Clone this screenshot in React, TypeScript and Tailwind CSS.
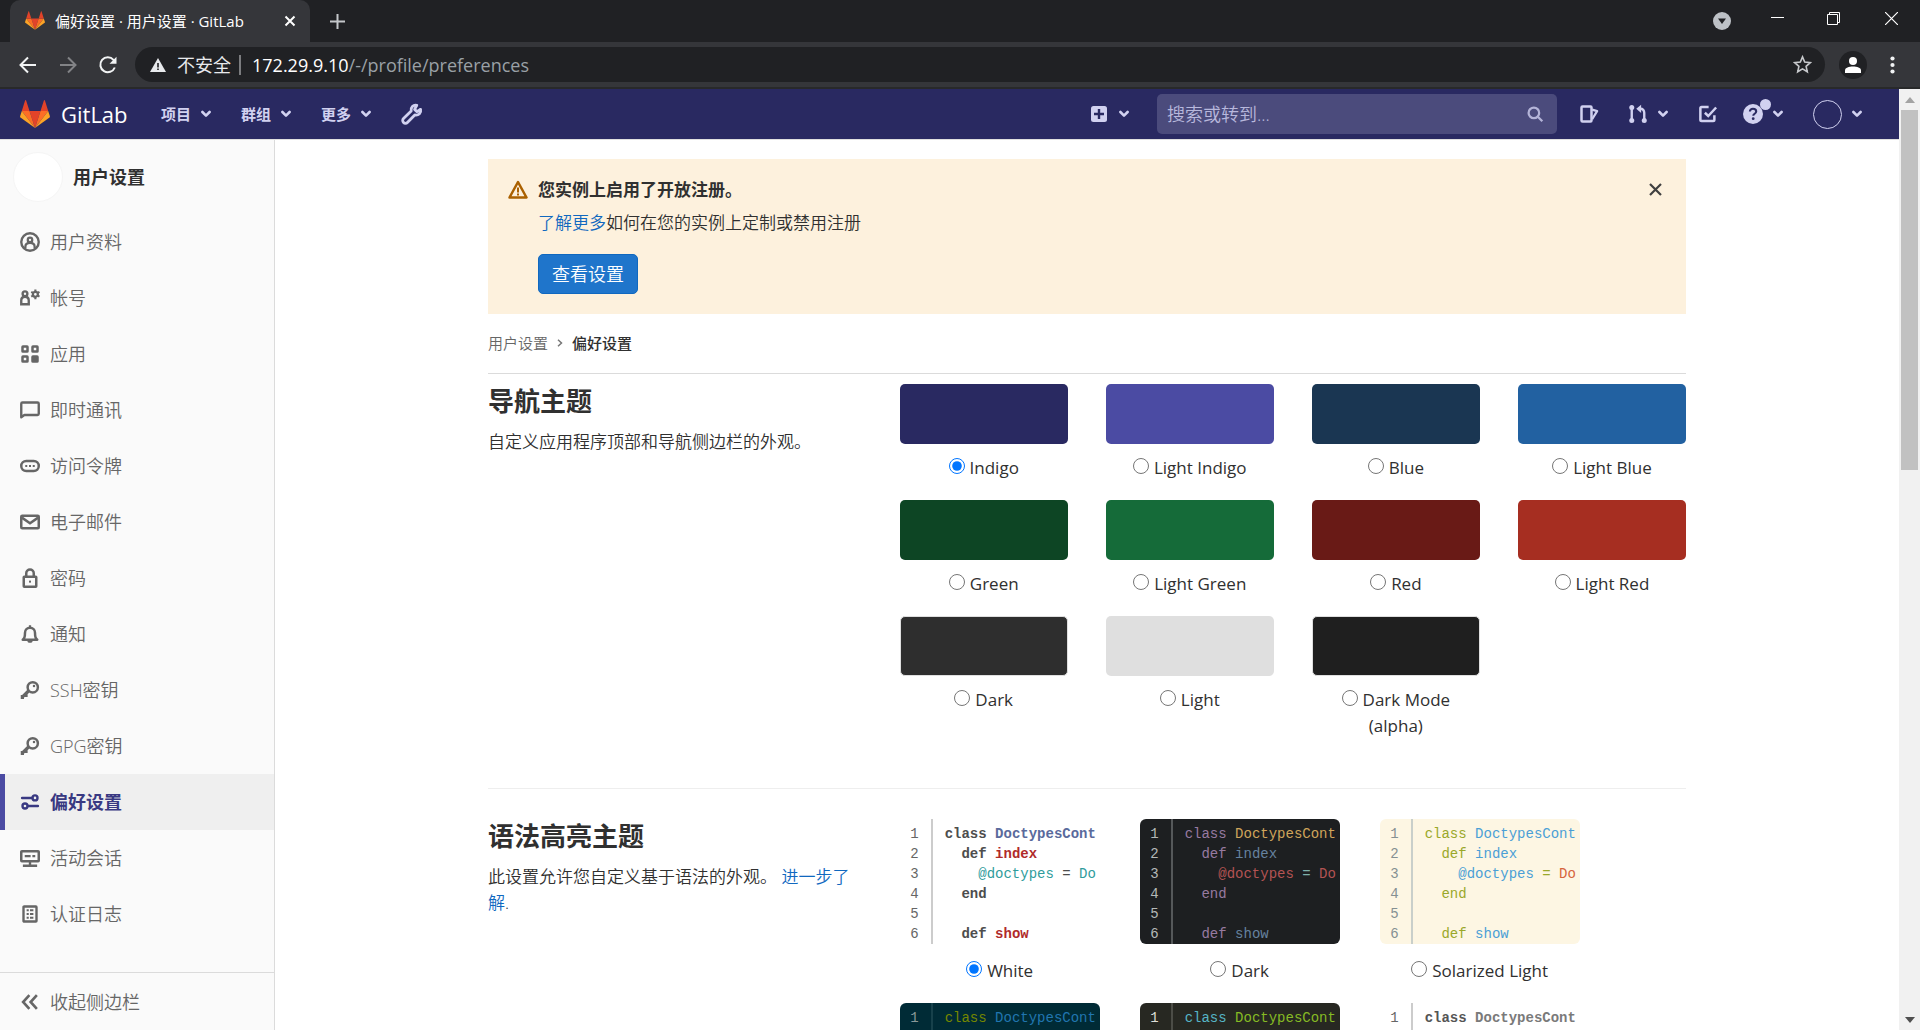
import React from 'react';

type IconProps = { className?: string };

const Svg = ({ className = 'size-5', children }: { className?: string; children: React.ReactNode }) => (
  <svg className={`${className} shrink-0`} viewBox="0 0 16 16" fill="none" stroke="currentColor" strokeWidth="2" aria-hidden="true">
    {children}
  </svg>
);

const Tanuki = ({ className }: IconProps) => (
  <svg className={`${className} shrink-0`} viewBox="0 0 30 28" aria-hidden="true">
    <path fill="#e24329" d="M15 28 20.5 11h-11z" />
    <path fill="#fc6d26" d="M15 28 9.5 11H1.8z" />
    <path fill="#fca326" d="M1.8 11 .1 16.200c-.15.5 0 1 .4 1.300L15 28z" />
    <path fill="#e24329" d="M1.800 11h7.700L6.200.700C6-.1 5.200-.1 5 .700z" />
    <path fill="#fc6d26" d="M15 28 20.500 11h7.700z" />
    <path fill="#fca326" d="m28.200 11 1.700 5.200c.15.5 0 1-.4 1.300L15 28z" />
    <path fill="#e24329" d="M28.200 11h-7.700L23.800.700c.2-.8 1-.8 1.200 0z" />
  </svg>
);

const Chevron = () => (
  <svg className="w-[10px] h-[8px] shrink-0" viewBox="0 0 10 8" fill="none" stroke="currentColor" strokeWidth="2.600" strokeLinecap="round" strokeLinejoin="round" aria-hidden="true">
    <path d="M1.400 2 5 5.600 8.600 2" />
  </svg>
);

const ProfileIcon = () => (
  <Svg>
    <circle cx="8" cy="8" r="7" strokeWidth="1.900" />
    <circle cx="8" cy="6.300" r="1.800" strokeWidth="1.800" />
    <path d="M4.300 13v-1.300c0-2 1.500-3 3.700-3s3.700 1 3.700 3V13" strokeWidth="1.800" />
  </Svg>
);
const AccountIcon = () => (
  <Svg>
    <circle cx="4" cy="4.600" r="1.900" strokeWidth="1.900" />
    <path d="M1 13V10c0-1.800 1.200-3 3-3s3 1.200 3 3v3z" strokeWidth="1.900" />
    <circle cx="12.300" cy="5" r="2" strokeWidth="1.800" />
    <path d="M12.300 1.100v1.600M12.300 7.300v1.600M9 3.100l1.400.8M14.200 6.100l1.400.8M9 6.900l1.400-.8M14.200 3.900l1.400-.8" strokeWidth="1.700" />
  </Svg>
);
const AppsIcon = () => (
  <Svg>
    <rect x="2" y="2" width="4" height="4" rx=".3" />
    <rect x="10" y="2" width="4" height="4" rx=".3" />
    <rect x="2" y="10" width="4" height="4" rx=".3" />
    <rect x="10" y="10" width="4" height="4" rx=".3" fill="currentColor" />
  </Svg>
);
const ChatIcon = () => (
  <Svg><path d="M1 13.800V3c0-.6.4-1 1-1h12c.6 0 1 .4 1 1v8c0 .6-.4 1-1 1H3.500z" strokeWidth="1.900" strokeLinejoin="round" /></Svg>
);
const TokenIcon = () => (
  <Svg>
    <rect x="1" y="4" width="14" height="8" rx="4" />
    <path d="M4.200 8h1.600M7.200 8h1.600M10.200 8h1.600" strokeWidth="1.600" />
  </Svg>
);
const MailIcon = () => (
  <Svg>
    <rect x="1" y="3" width="14" height="10" rx=".8" />
    <path d="M1.500 4.500 8 9l6.500-4.500" />
  </Svg>
);
const LockIcon = () => (
  <Svg>
    <rect x="3" y="7" width="10" height="8" rx=".4" />
    <path d="M5 7V4.200a3 3 0 0 1 6 0V7" />
    <rect x="7.200" y="10.100" width="1.600" height="1.600" fill="currentColor" stroke="none" />
  </Svg>
);
const BellIcon = () => (
  <Svg>
    <path d="M2.200 12.500c1.600-.8 1.800-2 1.800-5.500a4 4 0 0 1 8 0c0 3.500.2 4.700 1.800 5.500z" strokeLinejoin="round" />
    <path d="M6 13.500h4v.5c0 .6-.9 1-2 1s-2-.4-2-1zM7.100 1h1.800v2H7.100z" fill="currentColor" stroke="none" />
  </Svg>
);
const KeyIcon = () => (
  <Svg>
    <circle cx="10.200" cy="5.800" r="4.100" />
    <path d="M7.200 8.400 2 13.500M1.900 12v3.200M4.800 11v2.500" strokeWidth="2.600" />
    <circle cx="11.200" cy="4.800" r="1" fill="currentColor" stroke="none" />
  </Svg>
);
const PreferencesIcon = () => (
  <Svg>
    <path d="M1.700 4.700h8M6.500 11.200h7.800" strokeLinecap="round" />
    <circle cx="12" cy="4.700" r="2" strokeWidth="1.900" />
    <circle cx="4" cy="11.200" r="2" strokeWidth="1.900" />
  </Svg>
);
const SessionIcon = () => (
  <Svg>
    <rect x="1" y="2.500" width="14" height="8" rx=".5" />
    <path d="M3.800 6.500h4.700M9.900 6.500h2.300M8 11v3M2.300 14.200h11.400" strokeWidth="1.900" />
  </Svg>
);
const LogIcon = () => (
  <Svg>
    <rect x="2.800" y="2" width="10.400" height="12" rx=".5" strokeWidth="1.900" />
    <path d="M5.300 5h1.700M8 5h2.700M5.300 8h1.700M8 8h2.700M5.300 11h1.700M8 11h2.700" strokeWidth="1.600" />
  </Svg>
);

const NAV: { label: string; icon: () => React.JSX.Element; active?: boolean }[] = [
  { label: '用户资料', icon: ProfileIcon },
  { label: '帐号', icon: AccountIcon },
  { label: '应用', icon: AppsIcon },
  { label: '即时通讯', icon: ChatIcon },
  { label: '访问令牌', icon: TokenIcon },
  { label: '电子邮件', icon: MailIcon },
  { label: '密码', icon: LockIcon },
  { label: '通知', icon: BellIcon },
  { label: 'SSH密钥', icon: KeyIcon },
  { label: 'GPG密钥', icon: KeyIcon },
  { label: '偏好设置', icon: PreferencesIcon, active: true },
  { label: '活动会话', icon: SessionIcon },
  { label: '认证日志', icon: LogIcon },
];

const THEMES = [
  { name: 'Indigo', swatch: 'bg-[#292961]' },
  { name: 'Light Indigo', swatch: 'bg-[#4b4ba3]' },
  { name: 'Blue', swatch: 'bg-[#1a3652]' },
  { name: 'Light Blue', swatch: 'bg-[#2261a1]' },
  { name: 'Green', swatch: 'bg-[#0d4524]' },
  { name: 'Light Green', swatch: 'bg-[#156b39]' },
  { name: 'Red', swatch: 'bg-[#691a16]' },
  { name: 'Light Red', swatch: 'bg-[#a62e21]' },
  { name: 'Dark', swatch: 'bg-[#2e2e2e] border border-[#dfdfdf]' },
  { name: 'Light', swatch: 'bg-[#dfdfdf]' },
  { name: 'Dark Mode (alpha)', swatch: 'bg-[#1f1f1f] border border-[#dfdfdf]' },
];

type Syntax = {
  name: string; box: string; num: string; rule: string; kw: string; cls: string; fn: string; ivar: string; op: string; cons: string;
};

const SYNTAX: Syntax[] = [
  { name: 'White', box: 'bg-white', num: 'text-[#666]', rule: 'border-[#ccc]', kw: 'text-[#4d4d4d] font-bold', cls: 'text-[#5a6a9c] font-bold', fn: 'text-[#b02a2a] font-bold', ivar: 'text-[#2f9c9c]', op: 'text-[#4d4d4d]', cons: 'text-[#2f9c9c]' },
  { name: 'Dark', box: 'bg-[#1d1f21]', num: 'text-[#b5b9b8]', rule: 'border-[#55585a]', kw: 'text-[#977aa0]', cls: 'text-[#d0a55b]', fn: 'text-[#66829f]', ivar: 'text-[#b35353]', op: 'text-[#7fb0aa]', cons: 'text-[#b35353]' },
  { name: 'Solarized Light', box: 'bg-[#fdf6e3]', num: 'text-[#859092]', rule: 'border-[#c9cfca]', kw: 'text-[#9aa82a]', cls: 'text-[#4b9fd6]', fn: 'text-[#4b9fd6]', ivar: 'text-[#4b9fd6]', op: 'text-[#9aa82a]', cons: 'text-[#d6643c]' },
  { name: 'Solarized Dark', box: 'bg-[#002b36]', num: 'text-[#8a9899]', rule: 'border-[#17414b]', kw: 'text-[#758700]', cls: 'text-[#2076b0]', fn: 'text-[#2076b0]', ivar: 'text-[#2076b0]', op: 'text-[#758700]', cons: 'text-[#cb4b16]' },
  { name: 'Monokai', box: 'bg-[#272822]', num: 'text-[#deded8]', rule: 'border-[#4c4d47]', kw: 'text-[#56b5c6]', cls: 'text-[#86bb24]', fn: 'text-[#86bb24]', ivar: 'text-[#deded8]', op: 'text-[#f92672]', cons: 'text-[#56b5c6]' },
  { name: 'None', box: 'bg-white', num: 'text-[#666]', rule: 'border-[#ccc]', kw: 'text-[#555] font-bold', cls: 'text-[#7a7a7a] font-bold', fn: 'text-[#555]', ivar: 'text-[#555]', op: 'text-[#555]', cons: 'text-[#555]' },
];

const Preview = ({ s }: { s: Syntax }) => (
  <div className={`${s.box} flex h-[125px] overflow-hidden rounded-md font-['Liberation_Mono','Noto_Sans_CJK_SC',monospace] text-sm/5`}>
    <pre className={`${s.num} ${s.rule} w-[33px] shrink-0 border-r-2 pt-[5px] pr-3 text-right font-[inherit]`}>{'1\n2\n3\n4\n5\n6'}</pre>
    <pre className="pt-[5px] pl-3 font-[inherit]">
      <span className={s.kw}>class</span> <span className={s.cls}>DoctypesCont</span>{'\n  '}
      <span className={s.kw}>def</span> <span className={s.fn}>index</span>{'\n    '}
      <span className={s.ivar}>@doctypes</span> <span className={s.op}>=</span> <span className={s.cons}>Do</span>{'\n  '}
      <span className={s.kw}>end</span>{'\n\n  '}
      <span className={s.kw}>def</span> <span className={s.fn}>show</span>
    </pre>
  </div>
);

const BrowserChrome = () => (
  <div className="shrink-0 border-b-2 border-[#28292a] bg-[#35363a] text-white">
    <div className="flex h-[42px] items-stretch bg-[#202124] pl-[10px]">
      <div className="flex w-[300px] items-center rounded-t-[10px] bg-[#35363a] pr-[13px] pl-[15px] pb-2 pt-[7px]">
        <Tanuki className="h-[19px] w-5" />
        <span className="ml-[10px] flex-1 whitespace-nowrap text-[15px]/5">偏好设置 · 用户设置 · GitLab</span>
        <button aria-label="关闭标签页" className="p-px">
          <svg className="size-3" viewBox="0 0 12 12" stroke="currentColor" strokeWidth="2"><path d="m1.500 1.500 9 9m0-9-9 9" /></svg>
        </button>
      </div>
      <button aria-label="新标签页" className="ml-5 text-[#c4c7ca]">
        <svg className="size-[15px]" viewBox="0 0 15 15" stroke="currentColor" strokeWidth="2"><path d="M0 7.500h15M7.500 0v15" /></svg>
      </button>
      <div className="ml-auto flex items-center pr-[22px]">
        <button aria-label="搜索标签页">
          <svg className="size-[18px]" viewBox="0 0 18 18"><circle cx="9" cy="9" r="9" fill="#bdc1c6" /><path d="M5 6.500h8L9 12z" fill="#202124" /></svg>
        </button>
        <button aria-label="最小化" className="ml-10 pb-[7px]">
          <svg className="h-px w-[13px]" viewBox="0 0 13 1"><path d="M0 0h13v1H0z" fill="#fff" /></svg>
        </button>
        <button aria-label="还原" className="ml-[43px] pb-[5px]">
          <svg className="size-[13px]" viewBox="0 0 13 13" fill="none" stroke="#fff"><path d="M.5 2.500h10v10H.5zM2.500 2.500v-2h10v10h-2" /></svg>
        </button>
        <button aria-label="关闭" className="ml-[45px] pb-[5px]">
          <svg className="size-[13px]" viewBox="0 0 13 13" stroke="#fff" strokeWidth="1.200"><path d="m0 0 13 13M13 0 0 13" /></svg>
        </button>
      </div>
    </div>
    <div className="flex h-[45px] items-center pr-[25px] pl-[18px]">
      <button aria-label="后退">
        <svg className="size-5" viewBox="0 0 20 20" fill="none" stroke="#f1f3f4" strokeWidth="2"><path d="M18 10H3M10 2.500 2.500 10l7.500 7.500" /></svg>
      </button>
      <button aria-label="前进" className="ml-5">
        <svg className="size-5" viewBox="0 0 20 20" fill="none" stroke="#828386" strokeWidth="2"><path d="M2 10h15M10 2.500l7.500 7.500-7.500 7.500" /></svg>
      </button>
      <button aria-label="重新加载" className="ml-5">
        <svg className="size-5" viewBox="0 0 20 20" fill="none" stroke="#f1f3f4" strokeWidth="2"><path d="M16.800 12.500A7.500 7.500 0 1 1 15.500 4.800L17 6.500" /><path d="M18.500 1.800v7h-7z" fill="#f1f3f4" stroke="none" /></svg>
      </button>
      <div className="ml-[17px] flex h-[35px] flex-1 items-center rounded-full bg-[#202124] pr-[13px] pl-[15px] text-[18px]/6">
        <svg className="h-[14px] w-4" viewBox="0 0 16 14"><path d="M8 0 16 14H0z" fill="#e8eaed" /><path d="M7.200 5h1.600v4.500H7.200zM7.200 10.500h1.600v1.600H7.200z" fill="#202124" /></svg>
        <span className="ml-[11px] text-[#e8eaed]">不安全</span>
        <span className="mr-[11px] ml-2 h-5 w-[2px] bg-[#7b7c7f]" />
        <span role="textbox" aria-label="地址" tabIndex={0} className="flex-1 whitespace-nowrap outline-none">172.29.9.10<span className="text-[#9aa0a6]">/-/profile/preferences</span></span>
        <button aria-label="收藏">
          <svg className="size-[19px]" viewBox="0 0 19 19" fill="none" stroke="#c7c9cc" strokeWidth="1.600"><path d="m9.500 1.900 2.200 5.200 5.600.5-4.200 3.700 1.200 5.500-4.800-2.900-4.800 2.900 1.200-5.500-4.200-3.700 5.600-.5z" /></svg>
        </button>
      </div>
      <button aria-label="个人资料" className="ml-[14px] flex size-7 items-center justify-center rounded-full bg-[#202124]">
        <svg className="size-4" viewBox="0 0 16 16" fill="#fff"><circle cx="8" cy="4" r="4" /><path d="M0 16v-2.500c0-3 4-4 8-4s8 1 8 4V16z" /></svg>
      </button>
      <button aria-label="菜单" className="ml-[23px]">
        <svg className="h-[18px] w-[5px]" viewBox="0 0 5 18" fill="#f1f3f4"><circle cx="2.500" cy="2.500" r="2.100" /><circle cx="2.500" cy="9" r="2.100" /><circle cx="2.500" cy="15.500" r="2.100" /></svg>
      </button>
    </div>
  </div>
);

const Navbar = () => (
  <header className="flex h-[51px] shrink-0 items-center border-b border-[#dfdfdf] bg-[#292961] pr-[37px] pl-5 text-[#d1d1f0]">
    <a href="#home" className="flex items-center gap-[11px] text-white">
      <Tanuki className="h-7 w-[30px]" />
      <span className="w-[70px] text-[22px]/7">GitLab</span>
    </a>
    <nav className="ml-[30px] flex items-center gap-[30px] text-[15px]/5 font-bold">
      {['项目', '群组', '更多'].map((t) => (
        <button key={t} className="flex items-center gap-[10px]">{t}<Chevron /></button>
      ))}
      <a href="#admin" aria-label="管理中心">
        <svg className="size-[22px]" viewBox="0 0 22 22" fill="none" stroke="currentColor" strokeWidth="2.800" strokeLinejoin="round">
          <path d="M19.600 6.300 16 8.600 13.600 6.400 15.800 2.300C12.300 1.500 9.400 4.300 10.200 8L2.500 15.600a2.700 2.700 0 0 0 3.900 3.900L13.800 12c3.900.7 6.600-2.200 5.800-5.700z" />
        </svg>
      </a>
    </nav>
    <div className="ml-auto flex items-center">
      <button aria-label="新建" className="flex items-center gap-3">
        <svg className="size-4" viewBox="0 0 16 16"><rect width="16" height="16" rx="2.500" fill="currentColor" /><path d="M8 3v10M3 8h10" stroke="#292961" strokeWidth="2.400" /></svg>
        <Chevron />
      </button>
      <div className="ml-7 flex h-10 w-[400px] items-center rounded-[5px] bg-[#4b4b7c] pr-[13px] pl-[10px]">
        <input aria-label="搜索" className="h-8 min-w-0 flex-1 bg-transparent text-[18px]/6 font-[350] outline-none placeholder:text-[#b8b8dc]" placeholder="搜索或转到..." />
        <svg className="size-[18px]" viewBox="0 0 16 16" fill="none" stroke="#b4b4d8" strokeWidth="2"><circle cx="7" cy="7" r="4.700" /><path d="m10.500 10.500 4 4" /></svg>
      </div>
      <a href="#issues" aria-label="议题" className="ml-[22px]">
        <svg className="size-5" viewBox="0 0 16 16" fill="none" stroke="currentColor" strokeWidth="2"><rect x="2" y="2" width="8" height="12" rx=".8" /><path d="M10.500 4.500l4 1.200-4 6.500" strokeWidth="1.800" strokeLinejoin="round" /></svg>
      </a>
      <button aria-label="合并请求" className="ml-[29px] flex items-center gap-[10px]">
        <svg className="size-5" viewBox="0 0 16 16" fill="none" stroke="currentColor" strokeWidth="1.900"><path d="M3 3v10M13 13V7c0-2-1.200-3.200-3-3.200H9" /><path d="M10.500.5v6.600L6.600 3.800z" fill="currentColor" stroke="none" /><g fill="currentColor" stroke="none"><circle cx="3" cy="2.800" r="2" /><circle cx="3" cy="13.200" r="2" /><circle cx="13" cy="13.200" r="2" /></g></svg>
        <Chevron />
      </button>
      <a href="#todos" aria-label="待办事项" className="ml-[30px]">
        <svg className="size-5" viewBox="0 0 16 16" fill="none" stroke="currentColor" strokeWidth="2"><path d="M8.500 2.400H2.900c-.6 0-1 .4-1 1v9.200c0 .6.4 1 1 1h9.200c.6 0 1-.4 1-1V9" /><path d="m5.500 7 2.700 2.600L14.500 2.800" /></svg>
      </a>
      <button aria-label="帮助" className="ml-[25px] flex items-center gap-[10px]">
        <span className="relative">
          <svg className="size-5" viewBox="0 0 20 20"><circle cx="10" cy="10" r="10" fill="currentColor" /><path d="M6.900 7.600c0-1.700 1.300-2.800 3.100-2.800s3.200 1.100 3.200 2.700c0 2.200-2.900 2.300-2.900 4.200" fill="none" stroke="#292961" strokeWidth="2.100" /><circle cx="10.200" cy="14.700" r="1.400" fill="#292961" /></svg>
          <span className="absolute -top-[5px] -right-2 size-[11px] rounded-full bg-[#d1d1f0]" />
        </span>
        <Chevron />
      </button>
      <button aria-label="用户菜单" className="ml-[30px] flex items-center gap-[10px]">
        <span className="size-[29px] rounded-full border border-[#d1d1f0]" />
        <Chevron />
      </button>
    </div>
  </header>
);

const Sidebar = () => (
  <aside className="flex w-[275px] shrink-0 flex-col border-r border-[#dbdbdb] bg-[#fafafa] text-[#666]">
    <a href="#profile" className="flex h-[74px] shrink-0 items-center gap-[10px] pl-[13px] text-[18px]/6 font-bold text-[#303030]">
      <span className="size-[50px] rounded-full border border-[#f5f5f5] bg-white" />
      用户设置
    </a>
    <ul>
      {NAV.map(({ label, icon: Icon, active }) => (
        <li key={label}>
          <a
            href={`#${label}`}
            className={
              active
                ? 'flex h-14 items-center gap-[10px] border-l-[5px] border-[#4b4ba3] bg-[#efefef] pl-[15px] text-[18px]/6 font-bold text-[#393982]'
                : 'flex h-14 items-center gap-[10px] pl-5 text-[18px]/6 font-[350]'
            }
          >
            <Icon />
            {label}
          </a>
        </li>
      ))}
    </ul>
    <button className="mt-auto flex h-[58px] shrink-0 items-center gap-[10px] border-t border-[#dbdbdb] pl-5 text-[18px]/6 font-[350]">
      <Svg><path d="M7.500 2.500 2.500 8l5 5.500M13.500 2.500 8.500 8l5 5.500" strokeWidth="2.100" /></Svg>
      收起侧边栏
    </button>
  </aside>
);

const Option = ({ group, name, checked }: { group: string; name: string; checked: boolean }) => (
  <span className="block px-4 text-center text-[17px]/[26px]">
    <input type="radio" name={group} defaultChecked={checked} className="mr-[5px] size-4" />
    {name}
  </span>
);

const Section = ({ title, text, children }: { title: string; text: React.ReactNode; children: React.ReactNode }) => (
  <section className="-mx-5 flex">
    <div className="w-1/3 px-5">
      <h4 className="text-[26px]/[34px] font-bold">{title}</h4>
      <p className="mt-[11px] text-[17px]/[26px] font-[350]">{text}</p>
    </div>
    <div className="w-2/3 pr-5 pl-[19px]">{children}</div>
  </section>
);

export default function App() {
  return (
    <div className="flex h-screen flex-col overflow-hidden bg-white font-['Open_Sans','Noto_Sans_CJK_SC',sans-serif] text-[#303030]">
      <BrowserChrome />
      <div className="flex min-h-0 flex-1">
        <div className="flex min-w-0 flex-1 flex-col">
          <Navbar />
          <div className="flex min-h-0 flex-1">
            <Sidebar />
            <main className="min-w-0 flex-1 overflow-hidden px-5 pt-[19px]">
              <div className="mx-auto max-w-[1198px]">
                <div role="alert" className="flex items-start bg-[#fdf1dd] px-5 pt-[18px] pb-5">
                  <svg className="mt-[3px] size-5 shrink-0" viewBox="0 0 20 20" fill="none" stroke="#ab6100" strokeWidth="2.500" strokeLinejoin="round"><path d="M10 2 18.500 17.500H1.500z" /><path d="M10 7.500v5M10 13.500v2" strokeWidth="2" /></svg>
                  <div className="ml-[10px] flex-1">
                    <h2 className="text-[17px]/[26px] font-bold">您实例上启用了开放注册。</h2>
                    <p className="mt-[7px] text-[17px]/[26px] font-[350]"><a href="#learn" className="text-[#1068bf]">了解更多</a>如何在您的实例上定制或禁用注册</p>
                    <button className="mt-[18px] h-10 rounded-[5px] border border-[#1068bf] bg-[#1f75cb] px-[13px] text-[18px]/6 font-[350] text-white">查看设置</button>
                  </div>
                  <button aria-label="关闭" className="mt-[6px] mr-1">
                    <svg className="size-[13px]" viewBox="0 0 13 13" stroke="#404040" strokeWidth="2.200"><path d="m1 1 11 11M12 1 1 12" /></svg>
                  </button>
                </div>
                <nav className="flex h-[60px] items-center border-b border-[#dbdbdb] pb-[2px] text-[15px]/5">
                  <a href="#profile" className="font-[350] text-[#666]">用户设置</a>
                  <svg className="mx-[9px] h-2 w-[6px]" viewBox="0 0 6 8" fill="none" stroke="#777" strokeWidth="1.500"><path d="m1 .7 3.500 3.300L1 7.300" /></svg>
                  <a href="#preferences" className="font-medium">偏好设置</a>
                </nav>
                <div className="pt-[10px]">
                  <Section title="导航主题" text="自定义应用程序顶部和导航侧边栏的外观。">
                    <div className="grid grid-cols-4 gap-x-[38px] gap-y-[19px]">
                      {THEMES.map((t, i) => (
                        <label key={t.name}>
                          <span className={`${t.swatch} mb-[11px] block h-[60px] rounded-[5px]`} />
                          <Option group="theme" name={t.name} checked={i === 0} />
                        </label>
                      ))}
                    </div>
                  </Section>
                </div>
                <hr className="mt-[49px] mb-[30px] border-[#eee]" />
                <Section
                  title="语法高亮主题"
                  text={<>此设置允许您自定义基于语法的外观。 <a href="#syntax" className="text-[#1068bf]">进一步了解</a>.</>}
                >
                  <div className="flex flex-wrap gap-x-10 gap-y-[19px]">
                    {SYNTAX.map((s, i) => (
                      <label key={s.name} className="w-[200px]">
                        <span className="mb-[14px] block"><Preview s={s} /></span>
                        <Option group="syntax" name={s.name} checked={i === 0} />
                      </label>
                    ))}
                  </div>
                </Section>
              </div>
            </main>
          </div>
        </div>
        <div className="flex w-[21px] shrink-0 flex-col items-center bg-[#f1f1f1]">
          <svg className="mt-2 h-[6px] w-[10px] shrink-0" viewBox="0 0 10 6"><path d="M0 6 5 0l5 6z" fill="#a3a3a3" /></svg>
          <span className="mt-[7px] h-[360px] w-[17px] bg-[#c1c1c1]" />
          <svg className="mt-auto mb-[7px] h-[6px] w-[10px] shrink-0" viewBox="0 0 10 6"><path d="M0 0h10L5 6z" fill="#505050" /></svg>
        </div>
      </div>
    </div>
  );
}
